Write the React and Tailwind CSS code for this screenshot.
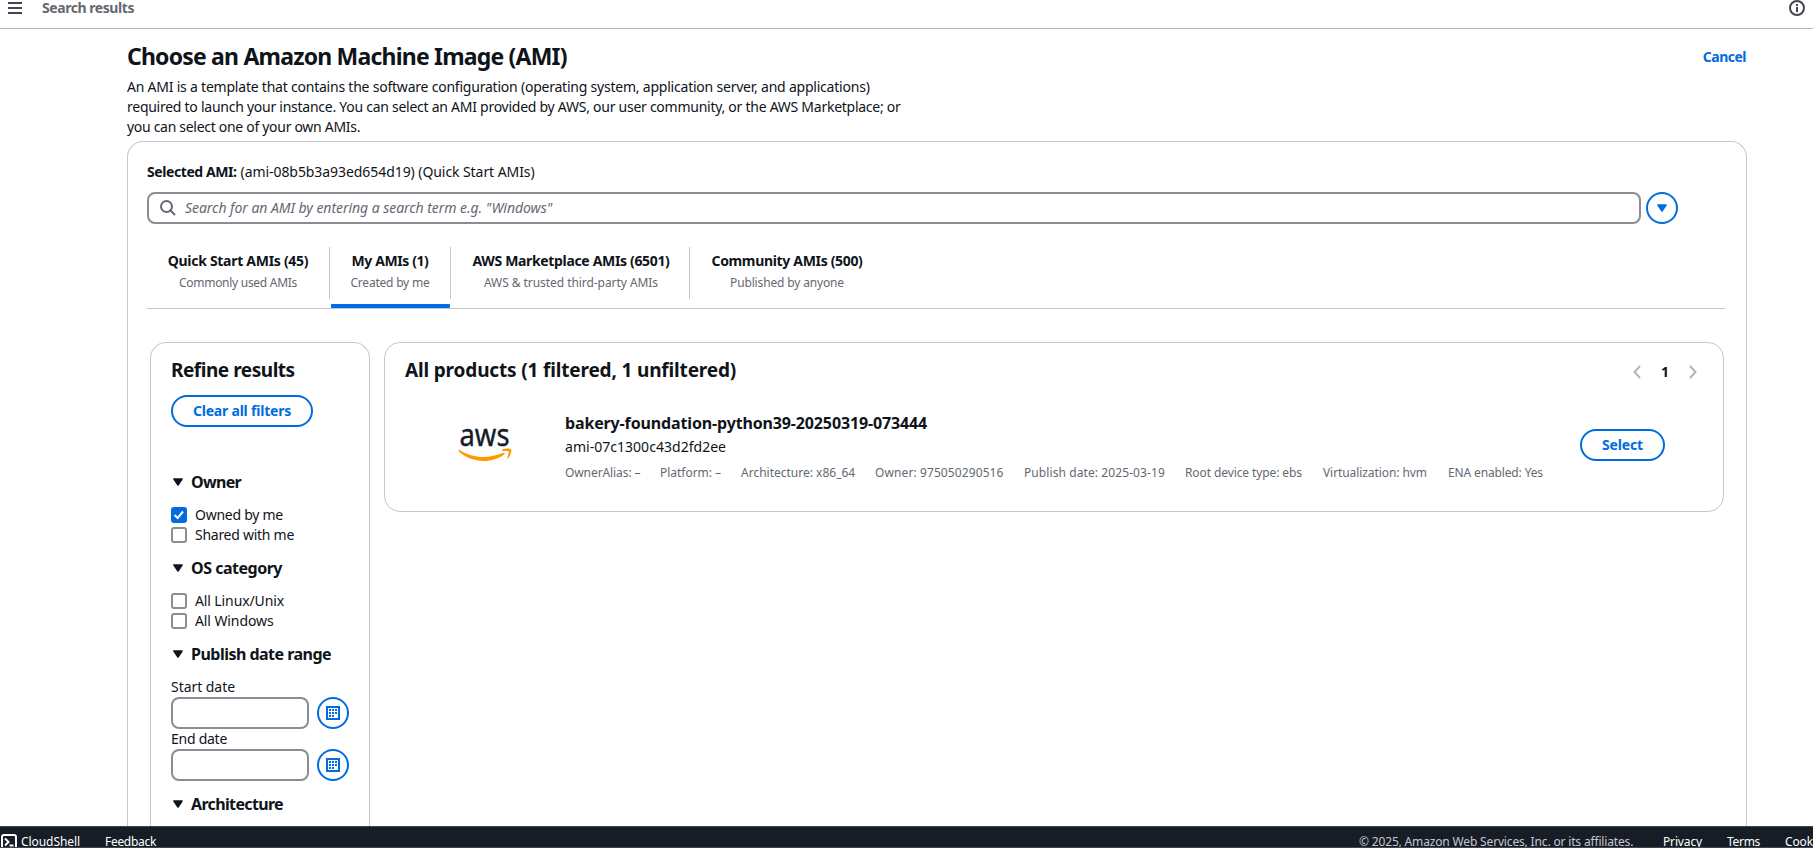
import React from 'react';

function Caret({ className }) {
  return (
    <svg width="10" height="8" viewBox="0 0 10 8" className={className}>
      <path d="M1 1H9L5 7Z" fill="currentColor" stroke="currentColor" strokeWidth="1.6" strokeLinejoin="round" />
    </svg>
  );
}

function CheckRow({ label, checked, tracking }) {
  return (
    <label className="flex h-5 items-center gap-2">
      {checked ? (
        <span className="flex size-4 items-center justify-center rounded-[3px] bg-[#006ce0]">
          <svg width="16" height="16" viewBox="0 0 16 16" fill="none" stroke="#fff" strokeWidth="2">
            <path d="M3.5 8L6.7 11L12 4.5" />
          </svg>
        </span>
      ) : (
        <span className="size-4 rounded-[3px] border-2 border-[#8c8c94] bg-white" />
      )}
      <span className={`text-[14px] leading-5 ${tracking}`}>{label}</span>
    </label>
  );
}

function SectionTitle({ children, className }) {
  return (
    <h3 className={`flex h-5 items-center text-[16px] font-bold leading-5 ${className}`}>
      <Caret className="ml-0.5 mr-2 shrink-0" />
      {children}
    </h3>
  );
}

function DateField({ label, tracking }) {
  return (
    <div>
      <div className={`text-[14px] leading-5 ${tracking}`}>{label}</div>
      <div className="flex gap-2">
        <div className="h-8 w-[138px] rounded-lg border-2 border-[#8c8c94]" />
        <button className="flex size-8 items-center justify-center rounded-full border-2 border-[#006ce0]">
          <svg width="14" height="14" viewBox="0 0 14 14" fill="#006ce0" shapeRendering="crispEdges">
            <path d="M0 0H14V14H0ZM2 2V12H12V2Z" fillRule="evenodd" />
            <path d="M6 3h2v2h-2zM9 3h2v2h-2zM3 6h2v2h-2zM6 6h2v2h-2zM9 6h2v2h-2zM3 9h2v2h-2zM6 9h2v2h-2zM3 3h2v2h-2z" />
          </svg>
        </button>
      </div>
    </div>
  );
}

const tabs = [
  { title: 'Quick Start AMIs (45)', sub: 'Commonly used AMIs', box: 'w-[183px] border-r', t: 'tracking-[-0.29px]', s: 'tracking-[-0.28px]' },
  { title: 'My AMIs (1)', sub: 'Created by me', box: 'w-[121px] border-r', t: 'tracking-[-0.4px]', s: 'tracking-[-0.21px]', active: true },
  { title: 'AWS Marketplace AMIs (6501)', sub: 'AWS & trusted third-party AMIs', box: 'w-[239px] border-r pl-0.5', t: 'tracking-[-0.34px]', s: 'tracking-[-0.06px]' },
  { title: 'Community AMIs (500)', sub: 'Published by anyone', box: 'w-[194px]', t: 'tracking-[-0.33px]', s: 'tracking-[-0.15px]' },
];

const meta = [
  ['OwnerAlias: –', 'w-[75px] tracking-[-0.09px]'],
  ['Platform: –', 'w-[61px] tracking-[-0.03px]'],
  ['Architecture: x86_64', 'w-[114px]'],
  ['Owner: 975050290516', 'w-[129px] tracking-[0.1px]'],
  ['Publish date: 2025-03-19', 'w-[141px] tracking-[0.09px]'],
  ['Root device type: ebs', 'w-[118px] tracking-[-0.1px]'],
  ['Virtualization: hvm', 'w-[105px] tracking-[-0.08px]'],
  ['ENA enabled: Yes', 'w-[95px] tracking-[-0.14px]'],
];

function AwsLogo() {
  return (
    <svg width="54" height="36" viewBox="0 0 54 36" className="overflow-visible">
      <text x="1.5" y="18" fontSize="31" textLength="50" lengthAdjust="spacingAndGlyphs" fill="#161d26" stroke="#161d26" strokeWidth="0.4">aws</text>
      <path d="M0.4 22.6C0.9 21.9 1.5 22 2.3 22.5C9 26.6 17 29 25.500 29C32 29 39 27.500 45.500 24.800C46.600 24.400 47.400 25.500 46.500 26.200C41 30.600 33 33 26 33C16.500 33 7.500 29.500 0.800 23.500C0.400 23.200 0.200 22.900 0.400 22.600Z" fill="#ff9900" />
      <path d="M44.200 21.800C46.500 20.200 52 20 53 21.200C54 22.500 52.600 27.500 50.200 30.200C49.700 30.700 49 30.400 49.200 29.700C49.900 27.800 51.200 24.300 50.500 23.400C49.800 22.600 46.500 22.900 44.700 23.100C44 23.200 43.500 22.400 44.200 21.800Z" fill="#ff9900" />
    </svg>
  );
}

export default function App() {
  return (
    <div className="flex h-[848px] w-full flex-col overflow-hidden whitespace-nowrap bg-white font-['Noto_Sans',sans-serif] text-[#0f141a]">
      <header className="flex h-[29px] shrink-0 items-start justify-between border-b border-[#b4b4bb] pl-2 pr-2">
        <div className="flex h-4 items-center">
          <svg width="14" height="12" viewBox="0 0 14 12" fill="#424650" shapeRendering="crispEdges">
            <path d="M0 0h14v2H0zM0 5h14v2H0zM0 10h14v2H0z" />
          </svg>
          <span className="ml-5 text-[14px] font-bold leading-4 tracking-[-0.44px] text-[#656871]">Search results</span>
        </div>
        <svg width="16" height="16" viewBox="0 0 16 16" fill="none" stroke="#424650" strokeWidth="2">
          <circle cx="8" cy="8" r="7" />
          <path d="M8 7V12M8 4V6" />
        </svg>
      </header>

      <main className="flex min-h-0 w-[1747px] flex-1 flex-col overflow-hidden pl-[127px] pt-3">
        <div className="flex shrink-0 justify-between">
          <div>
            <h1 className="text-[23px] font-bold leading-[30px] tracking-[-0.8px]">Choose an Amazon Machine Image (AMI)</h1>
            <p className="mt-1.5 text-[14px] leading-5">
              <span className="block tracking-[-0.22px]">An AMI is a template that contains the software configuration (operating system, application server, and applications)</span>
              <span className="block tracking-[-0.26px]">required to launch your instance. You can select an AMI provided by AWS, our user community, or the AWS Marketplace; or</span>
              <span className="block tracking-[-0.3px]">you can select one of your own AMIs.</span>
            </p>
          </div>
          <a className="mr-px mt-1.5 text-[14px] font-bold leading-5 tracking-[-0.5px] text-[#006ce0]">Cancel</a>
        </div>

        <section className="mt-1 flex min-h-0 flex-1 flex-col rounded-t-2xl border border-b-0 border-[#c6c6cd] pl-[19px] pt-5">
          <p className="h-5 shrink-0 text-[14px] leading-5">
            <b className="tracking-[-0.42px]">Selected AMI:</b>
            <span className="ml-1 tracking-[-0.07px]">(ami-08b5b3a93ed654d19) (Quick Start AMIs)</span>
          </p>
          <div className="mt-2.5 flex h-8 shrink-0 gap-[5px]">
            <div className="flex w-[1494px] items-center rounded-lg border-2 border-[#8c8c94] pl-[11px]">
              <svg width="16" height="16" viewBox="0 0 16 16" fill="none" stroke="#656871" strokeWidth="2">
                <circle cx="6.500" cy="6.500" r="5.500" />
                <path d="M10.300 10.300L15 15" />
              </svg>
              <span className="ml-[9px] text-[14px] italic leading-5 tracking-[-0.05px] text-[#656871]">Search for an AMI by entering a search term e.g. "Windows"</span>
            </div>
            <button className="flex size-8 items-center justify-center rounded-full border-2 border-[#006ce0] text-[#006ce0]">
              <Caret />
            </button>
          </div>

          <nav className="mt-[23px] flex h-[62px] w-[1578px] shrink-0 border-b border-[#c6c6cd]">
            {tabs.map((tab) => (
              <div key={tab.title} className="flex flex-col">
                <div className={`flex h-[52px] flex-col items-center border-[#c6c6cd] pt-1 ${tab.box}`}>
                  <span className={`text-[14px] font-bold leading-5 ${tab.t}`}>{tab.title}</span>
                  <span className={`mt-1 text-[12px] leading-4 text-[#656871] ${tab.s}`}>{tab.sub}</span>
                </div>
                {tab.active && <div className="ml-px mt-[5px] h-1 w-[119px] rounded-[1px] bg-[#006ce0]" />}
              </div>
            ))}
          </nav>

          <div className="ml-[3px] mt-[33px] flex min-h-0 flex-1 items-start gap-3.5">
            <aside className="h-full w-[220px] rounded-t-2xl border border-b-0 border-[#c6c6cd] pl-5 pt-[15px]">
              <h2 className="text-[19px] font-bold leading-6 tracking-[-0.47px]">Refine results</h2>
              <button className="mt-[13px] flex h-8 w-[142px] items-center justify-center rounded-full border-2 border-[#006ce0] text-[14px] font-bold leading-5 tracking-[-0.21px] text-[#006ce0]">
                Clear all filters
              </button>
              <SectionTitle className="mb-[13px] mt-[45px] tracking-[-0.69px]">Owner</SectionTitle>
              <CheckRow label="Owned by me" checked tracking="tracking-[-0.26px]" />
              <CheckRow label="Shared with me" tracking="tracking-[-0.27px]" />
              <SectionTitle className="my-[13px] tracking-[-0.49px]">OS category</SectionTitle>
              <CheckRow label="All Linux/Unix" tracking="tracking-[-0.11px]" />
              <CheckRow label="All Windows" tracking="tracking-[-0.1px]" />
              <SectionTitle className="my-[13px] tracking-[-0.52px]">Publish date range</SectionTitle>
              <DateField label="Start date" tracking="tracking-[-0.05px]" />
              <DateField label="End date" tracking="tracking-[-0.26px]" />
              <SectionTitle className="mt-[13px] tracking-[-0.65px]">Architecture</SectionTitle>
            </aside>

            <section className="h-[170px] w-[1340px] rounded-2xl border border-[#c6c6cd] pl-5 pr-[26px] pt-[15px]">
              <div className="flex items-center justify-between">
                <h2 className="text-[19px] font-bold leading-6 tracking-[-0.16px]">All products (1 filtered, 1 unfiltered)</h2>
                <div className="flex items-center pt-1">
                  <svg width="8" height="14" viewBox="0 0 8 14" fill="none" stroke="#b4b4bb" strokeWidth="2">
                    <path d="M7 1L1.500 7L7 13" />
                  </svg>
                  <span className="w-12 text-center text-[14px] font-bold leading-5">1</span>
                  <svg width="8" height="14" viewBox="0 0 8 14" fill="none" stroke="#b4b4bb" strokeWidth="2">
                    <path d="M1 1L6.500 7L1 13" />
                  </svg>
                </div>
              </div>
              <div className="mt-[31px] flex items-start">
                <div className="ml-[53px] mt-[15px] w-[107px]">
                  <AwsLogo />
                </div>
                <div className="w-[1015px]">
                  <h3 className="text-[16px] font-bold leading-5 tracking-[-0.14px]">bakery-foundation-python39-20250319-073444</h3>
                  <p className="mt-1 text-[14px] leading-5 tracking-[0.03px]">ami-07c1300c43d2fd2ee</p>
                  <div className="mt-2 flex gap-5 text-[12px] leading-4 text-[#656871]">
                    {meta.map(([text, cls]) => (
                      <span key={text} className={cls}>{text}</span>
                    ))}
                  </div>
                </div>
                <button className="mt-4 flex h-8 w-[85px] items-center justify-center rounded-full border-2 border-[#006ce0] text-[14px] font-bold leading-5 tracking-[-0.15px] text-[#006ce0]">
                  Select
                </button>
              </div>
            </section>
          </div>
        </section>
      </main>

      <footer className="flex h-[22px] shrink-0 justify-between overflow-hidden border-y border-[#424650] bg-[#161d26] pt-[7px] text-[12px] leading-4 text-white">
        <div className="flex">
          <svg width="16" height="16" viewBox="0 0 16 16" fill="none" stroke="#fff" strokeWidth="2" className="ml-px">
            <rect x="1" y="1" width="14" height="14" rx="2" />
            <path d="M4 4.500L7.500 8L4 11.500M8.500 11.500H12.500" />
          </svg>
          <span className="ml-1 w-[84px] tracking-[-0.07px]">CloudShell</span>
          <span className="tracking-[-0.3px]">Feedback</span>
        </div>
        <div className="flex w-[454px] overflow-hidden">
          <span className="w-[304px] shrink-0 tracking-[-0.16px] text-[#c6c6cd]">© 2025, Amazon Web Services, Inc. or its affiliates.</span>
          <span className="w-16 shrink-0 tracking-[-0.15px]">Privacy</span>
          <span className="w-[58px] shrink-0 tracking-[-0.3px]">Terms</span>
          <span className="shrink-0 tracking-[-0.15px]">Cook</span>
        </div>
      </footer>
    </div>
  );
}
